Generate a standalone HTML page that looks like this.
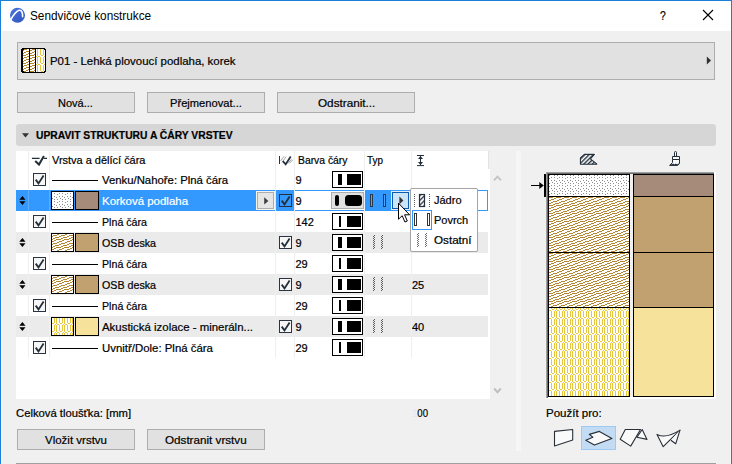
<!DOCTYPE html>
<html><head><meta charset="utf-8"><title>Sendvičové konstrukce</title>
<style>
html,body{margin:0;padding:0;}
body{width:732px;height:464px;overflow:hidden;background:#f0f0f0;position:relative;font-family:"Liberation Sans",sans-serif;font-size:11px;color:#000;}
.a{position:absolute;}
.t{position:absolute;white-space:nowrap;line-height:14px;height:14px;transform-origin:0 50%;-webkit-text-stroke:0.2px currentColor;}
.btn{position:absolute;box-sizing:border-box;background:#e1e1e1;border:1px solid #adadad;}
.row{position:absolute;left:16px;width:472px;height:21px;}
.g{background:#f0f0f0;}
.w{background:#fff;}
.cb{position:absolute;width:13px;height:13px;box-sizing:border-box;border:1px solid #2a3440;background:#f6f6f6;}
.ln{position:absolute;left:52px;width:46px;height:1px;background:#000;}
.sw{position:absolute;box-sizing:border-box;border:1px solid #000;width:24px;height:19px;}
.pen{position:absolute;left:332px;width:31px;height:17px;box-sizing:border-box;border:1px solid #000;background:#fff;}
.pen i{position:absolute;top:2px;height:11px;background:#000;}
.sep{width:1px;background:#efefef;}
</style></head><body>
<svg width="0" height="0" style="position:absolute">
<defs>
<pattern id="p_dots" width="8" height="8" patternUnits="userSpaceOnUse" x="2" y="5">
<g fill="#8e8e8e" shape-rendering="crispEdges"><rect x="3" y="0" width="1" height="1"/><rect x="6" y="0" width="1" height="1"/><rect x="1" y="1" width="1" height="1"/><rect x="3" y="3" width="1" height="1"/><rect x="6" y="3" width="1" height="1"/><rect x="0" y="4" width="1" height="1"/><rect x="4" y="5" width="1" height="1"/><rect x="1" y="6" width="1" height="1"/><rect x="6" y="6" width="1" height="1"/></g>
</pattern>
<pattern id="p_osb" width="8" height="8" patternUnits="userSpaceOnUse" x="2" y="1">
<g fill="#b5852d" shape-rendering="crispEdges"><rect x="0" y="0" width="5" height="1"/><rect x="6" y="1" width="2" height="1"/><rect x="3" y="2" width="3" height="1"/><rect x="1" y="3" width="2" height="1"/><rect x="0" y="4" width="1" height="1"/><rect x="5" y="4" width="3" height="1"/><rect x="3" y="5" width="2" height="1"/><rect x="0" y="6" width="3" height="1"/><rect x="7" y="6" width="1" height="1"/><rect x="5" y="7" width="2" height="1"/></g>
</pattern>
<pattern id="p_insL" width="8" height="8" patternUnits="userSpaceOnUse" x="5" y="2">
<g fill="#e8c63c"><rect x="0" y="1" width="1" height="6"/><rect x="3" y="1" width="1" height="6"/><rect x="5" y="1" width="1" height="7"/><rect x="1" y="7" width="2" height="1"/><rect x="4" y="0" width="1" height="1"/><rect x="6" y="0" width="2" height="1"/></g>
</pattern>
<pattern id="p_ins" href="#p_insL" x="7" y="6"/>
<pattern id="p_dotsS" href="#p_dots" x="4" y="1"/>
<pattern id="p_osbS2" href="#p_osb" x="4" y="5"/>
</defs></svg>

<!-- window frame -->
<div class="a" style="left:0;top:0;width:732px;height:31px;background:#fff;"></div>
<div class="a" style="left:0;top:0;width:732px;height:1px;background:#1a7fd6;"></div>
<div class="a" style="left:0;top:0;width:1px;height:464px;background:#1a7fd6;"></div>
<div class="a" style="left:731px;top:0;width:1px;height:464px;background:#1a7fd6;"></div>
<div class="a" style="left:1px;top:31px;width:1px;height:433px;background:#fafafa;"></div>
<div class="a" style="left:730px;top:31px;width:1px;height:433px;background:#f8f4f2;"></div>
<div class="t" style="left:30px;top:8px;font-size:12px;line-height:16px;height:16px;transform:scaleX(0.982);-webkit-text-stroke:0;">Sendvičové konstrukce</div>

<!-- combo -->
<div class="btn" style="left:17px;top:42px;width:698px;height:38px;"></div>
<div class="t" style="left:50px;top:54px;font-size:11.5px;transform:scaleX(0.994);">P01 - Lehká plovoucí podlaha, korek</div>


<!-- title icon -->
<svg class="a" style="left:9px;top:7px;" width="17" height="17" viewBox="0 0 17 17">
<defs><linearGradient id="ig" x1="0" y1="0" x2="1" y2="1"><stop offset="0" stop-color="#4a74dc"/><stop offset="1" stop-color="#2f55bd"/></linearGradient></defs>
<circle cx="8.5" cy="8.2" r="7.5" fill="url(#ig)"/>
<path d="M1.4 13.3 C3.5 9.5 7 4.2 10.2 3.3 C12.6 2.7 13.8 6 13.6 9.8" fill="none" stroke="#fff" stroke-width="1.6" stroke-linecap="round"/>
</svg>
<div class="t" style="left:660px;top:8px;font-size:13px;line-height:16px;height:16px;transform:scaleX(0.8);">?</div>
<svg class="a" style="left:702px;top:9px;" width="12" height="12" viewBox="0 0 12 12"><path d="M1 1 L11 11 M11 1 L1 11" stroke="#000" stroke-width="1.1" fill="none"/></svg>
<!-- combo icon -->
<svg class="a" style="left:21px;top:48px;" width="25" height="25" viewBox="0 0 25 25" shape-rendering="crispEdges">
<defs><pattern id="p_insI" href="#p_insL" x="3" y="0"/><pattern id="p_osbI" href="#p_osb" x="0" y="7"/></defs>
<rect x="1" y="1" width="23" height="23" fill="#fff"/>
<rect x="2" y="1" width="6" height="23" fill="url(#p_osbI)"/>
<rect x="9" y="1" width="5" height="23" fill="url(#p_osbI)"/>
<rect x="15" y="1" width="9" height="23" fill="url(#p_insI)"/>
<g fill="#000"><rect x="1" y="0" width="23" height="1"/><rect x="1" y="24" width="23" height="1"/><rect x="0" y="1" width="2" height="23"/><rect x="24" y="1" width="1" height="23"/><rect x="8" y="1" width="1" height="23"/><rect x="14" y="1" width="1" height="23"/>
<rect x="2" y="1" width="1" height="1"/><rect x="2" y="23" width="1" height="1"/><rect x="23" y="1" width="1" height="1"/><rect x="23" y="23" width="1" height="1"/></g>
</svg>
<svg class="a" style="left:706px;top:56px;" width="6" height="9" viewBox="0 0 6 9"><path d="M0.8 0.5 L5 4.5 L0.8 8.5 Z" fill="#303030"/></svg>

<!-- buttons -->
<div class="btn" style="left:17px;top:92px;width:118px;height:21px;"></div>
<div class="btn" style="left:147px;top:92px;width:118px;height:21px;"></div>
<div class="btn" style="left:277px;top:92px;width:138px;height:21px;"></div>


<div class="t" style="left:58px;top:96px;width:36px;">Nová...</div>
<div class="t" style="left:170px;top:96px;transform:scaleX(1.013);">Přejmenovat...</div>
<div class="t" style="left:317.8px;top:96px;transform:scaleX(1.065);">Odstranit...</div>

<!-- section header -->
<div class="a" style="left:16px;top:124px;width:700px;height:22px;background:#d6d6d6;border-radius:3px;"></div>


<svg class="a" style="left:22px;top:132.5px;" width="7" height="5" viewBox="0 0 7 5"><path d="M0 0.3 H7 L3.5 4.4 Z" fill="#333"/></svg>
<div class="t" style="left:36px;top:128px;font-weight:bold;font-size:11px;transform:scaleX(0.937);">UPRAVIT STRUKTURU A ČÁRY VRSTEV</div>

<!-- list -->
<div class="a w" style="left:16px;top:169px;width:474px;height:230px;"></div>
<div class="a w" style="left:16px;top:151px;width:472px;height:18px;"></div>
<!--LISTSTART-->
<div class="a" style="left:488px;top:151px;width:1px;height:18px;background:#e3e3e3;"></div>
<!-- row 1 -->
<div class="cb" style="left:33px;top:173px;"><svg class="a" style="left:0;top:0;" width="11" height="11" viewBox="0 0 11 11"><path d="M1.7 5.6 L4.5 9.4 L9.6 1.6" stroke="#222e3a" stroke-width="1.8" fill="none"/></svg></div>
<div class="ln" style="top:180px;"></div>
<div class="t" style="left:102px;top:173px;color:#000;transform:scaleX(1.031);">Venku/Nahoře: Plná čára</div>
<div class="pen" style="top:171px;"><i style="left:5px;width:4px;"></i><i style="left:14px;width:13.5px;"></i></div>
<div class="t" style="left:295.5px;top:173px;">9</div>
<!-- row 2 -->
<div class="row" style="top:190px;background:#3399ff;"></div>
<svg class="a" style="left:19px;top:196px;" width="7" height="9" viewBox="0 0 7 9"><path d="M3.4 0 L6.5 3.8 H0.3 Z M3.4 9 L6.5 5.2 H0.3 Z" fill="#000"/></svg>
<div class="sw" style="left:51px;width:23px;top:191px;background:#fff;"><svg class="a" style="left:0;top:0" width="21" height="17"><rect width="21" height="17" fill="url(#p_dotsS)"/></svg></div>
<div class="sw" style="left:75px;top:191px;background:#a68b7b;"></div>
<div class="t" style="left:102px;top:194px;color:#fff;transform:scaleX(1.042);">Korková podlaha</div>
<div class="a" style="left:256px;top:191px;width:19px;height:19px;background:#f6f3ee;"></div>
<div class="btn" style="left:257px;top:192px;width:17px;height:17px;background:#e5e5e5;"><svg class="a" style="left:6px;top:4px;" width="5" height="8" viewBox="0 0 5 8"><path d="M0.2 0.2 L4.4 3.9 L0.2 7.6 Z" fill="#404040"/></svg></div>
<div class="a" style="left:295px;top:190px;width:70px;height:21px;box-sizing:border-box;border-top:1px solid #3399ff;border-bottom:1px solid #3399ff;background:#fff;"></div>
<div class="cb" style="left:279px;top:194px;background:#3399ff;border-color:#26303c;"><svg class="a" style="left:0;top:0;" width="11" height="11" viewBox="0 0 11 11"><path d="M1.7 5.6 L4.5 9.4 L9.6 1.6" stroke="#222e3a" stroke-width="1.8" fill="none"/></svg></div>
<div class="a" style="left:331px;top:192px;width:33px;height:17px;background:#e1e1e1;box-sizing:border-box;border:1px solid #adadad;"><i class="a" style="left:3px;top:2px;width:4px;height:11px;background:#000;border-radius:2px;"></i><i class="a" style="left:13px;top:2px;width:17px;height:11px;background:#000;border-radius:3.5px;"></i></div>
<div class="t" style="left:295.5px;top:194px;">9</div>
<!-- row 3 -->
<div class="cb" style="left:33px;top:215px;"><svg class="a" style="left:0;top:0;" width="11" height="11" viewBox="0 0 11 11"><path d="M1.7 5.6 L4.5 9.4 L9.6 1.6" stroke="#222e3a" stroke-width="1.8" fill="none"/></svg></div>
<div class="ln" style="top:222px;"></div>
<div class="t" style="left:102px;top:215px;color:#000;transform:scaleX(0.968);">Plná čára</div>
<div class="pen" style="top:213px;"><i style="left:6px;width:2px;"></i><i style="left:14px;width:13.5px;"></i></div>
<div class="t" style="left:295.5px;top:215px;">142</div>
<!-- row 4 -->
<div class="row" style="top:232px;background:#ebebeb;"></div>
<svg class="a" style="left:19px;top:238px;" width="7" height="9" viewBox="0 0 7 9"><path d="M3.4 0 L6.5 3.8 H0.3 Z M3.4 9 L6.5 5.2 H0.3 Z" fill="#000"/></svg>
<div class="sw" style="left:51px;width:23px;top:233px;background:#fff;"><svg class="a" style="left:0;top:0" width="21" height="17"><rect width="21" height="17" fill="url(#p_osbS2)"/></svg></div>
<div class="sw" style="left:75px;top:233px;background:#c2a171;"></div>
<div class="t" style="left:102px;top:236px;color:#000;transform:scaleX(0.971);">OSB deska</div>
<div class="cb" style="left:279px;top:236px;"><svg class="a" style="left:0;top:0;" width="11" height="11" viewBox="0 0 11 11"><path d="M1.7 5.6 L4.5 9.4 L9.6 1.6" stroke="#222e3a" stroke-width="1.8" fill="none"/></svg></div>
<div class="pen" style="top:234px;"><i style="left:5px;width:4px;"></i><i style="left:14px;width:13.5px;"></i></div>
<div class="t" style="left:295.5px;top:236px;">9</div>
<svg class="a" style="left:373px;top:235px;" width="10" height="14" viewBox="0 0 10 14" shape-rendering="crispEdges"><g fill="#5a5a5a"><rect x="1" y="0" width="1" height="1"/><rect x="9" y="0" width="1" height="1"/><rect x="0" y="1" width="1" height="1"/><rect x="8" y="1" width="1" height="1"/><rect x="1" y="2" width="1" height="1"/><rect x="9" y="2" width="1" height="1"/><rect x="0" y="3" width="1" height="1"/><rect x="8" y="3" width="1" height="1"/><rect x="1" y="4" width="1" height="1"/><rect x="9" y="4" width="1" height="1"/><rect x="0" y="5" width="1" height="1"/><rect x="8" y="5" width="1" height="1"/><rect x="1" y="6" width="1" height="1"/><rect x="9" y="6" width="1" height="1"/><rect x="0" y="7" width="1" height="1"/><rect x="8" y="7" width="1" height="1"/><rect x="1" y="8" width="1" height="1"/><rect x="9" y="8" width="1" height="1"/><rect x="0" y="9" width="1" height="1"/><rect x="8" y="9" width="1" height="1"/><rect x="1" y="10" width="1" height="1"/><rect x="9" y="10" width="1" height="1"/><rect x="0" y="11" width="1" height="1"/><rect x="8" y="11" width="1" height="1"/><rect x="1" y="12" width="1" height="1"/><rect x="9" y="12" width="1" height="1"/><rect x="0" y="13" width="1" height="1"/><rect x="8" y="13" width="1" height="1"/></g></svg>
<!-- row 5 -->
<div class="cb" style="left:33px;top:257px;"><svg class="a" style="left:0;top:0;" width="11" height="11" viewBox="0 0 11 11"><path d="M1.7 5.6 L4.5 9.4 L9.6 1.6" stroke="#222e3a" stroke-width="1.8" fill="none"/></svg></div>
<div class="ln" style="top:264px;"></div>
<div class="t" style="left:102px;top:257px;color:#000;transform:scaleX(0.968);">Plná čára</div>
<div class="pen" style="top:255px;"><i style="left:6px;width:2px;"></i><i style="left:14px;width:13.5px;"></i></div>
<div class="t" style="left:295.5px;top:257px;">29</div>
<!-- row 6 -->
<div class="row" style="top:274px;background:#ebebeb;"></div>
<svg class="a" style="left:19px;top:280px;" width="7" height="9" viewBox="0 0 7 9"><path d="M3.4 0 L6.5 3.8 H0.3 Z M3.4 9 L6.5 5.2 H0.3 Z" fill="#000"/></svg>
<div class="sw" style="left:51px;width:23px;top:275px;background:#fff;"><svg class="a" style="left:0;top:0" width="21" height="17"><rect width="21" height="17" fill="url(#p_osbS2)"/></svg></div>
<div class="sw" style="left:75px;top:275px;background:#c2a171;"></div>
<div class="t" style="left:102px;top:278px;color:#000;transform:scaleX(0.971);">OSB deska</div>
<div class="cb" style="left:279px;top:278px;"><svg class="a" style="left:0;top:0;" width="11" height="11" viewBox="0 0 11 11"><path d="M1.7 5.6 L4.5 9.4 L9.6 1.6" stroke="#222e3a" stroke-width="1.8" fill="none"/></svg></div>
<div class="pen" style="top:276px;"><i style="left:5px;width:4px;"></i><i style="left:14px;width:13.5px;"></i></div>
<div class="t" style="left:295.5px;top:278px;">9</div>
<svg class="a" style="left:373px;top:277px;" width="10" height="14" viewBox="0 0 10 14" shape-rendering="crispEdges"><g fill="#5a5a5a"><rect x="1" y="0" width="1" height="1"/><rect x="9" y="0" width="1" height="1"/><rect x="0" y="1" width="1" height="1"/><rect x="8" y="1" width="1" height="1"/><rect x="1" y="2" width="1" height="1"/><rect x="9" y="2" width="1" height="1"/><rect x="0" y="3" width="1" height="1"/><rect x="8" y="3" width="1" height="1"/><rect x="1" y="4" width="1" height="1"/><rect x="9" y="4" width="1" height="1"/><rect x="0" y="5" width="1" height="1"/><rect x="8" y="5" width="1" height="1"/><rect x="1" y="6" width="1" height="1"/><rect x="9" y="6" width="1" height="1"/><rect x="0" y="7" width="1" height="1"/><rect x="8" y="7" width="1" height="1"/><rect x="1" y="8" width="1" height="1"/><rect x="9" y="8" width="1" height="1"/><rect x="0" y="9" width="1" height="1"/><rect x="8" y="9" width="1" height="1"/><rect x="1" y="10" width="1" height="1"/><rect x="9" y="10" width="1" height="1"/><rect x="0" y="11" width="1" height="1"/><rect x="8" y="11" width="1" height="1"/><rect x="1" y="12" width="1" height="1"/><rect x="9" y="12" width="1" height="1"/><rect x="0" y="13" width="1" height="1"/><rect x="8" y="13" width="1" height="1"/></g></svg>
<div class="t" style="left:412px;top:278px;">25</div>
<!-- row 7 -->
<div class="cb" style="left:33px;top:299px;"><svg class="a" style="left:0;top:0;" width="11" height="11" viewBox="0 0 11 11"><path d="M1.7 5.6 L4.5 9.4 L9.6 1.6" stroke="#222e3a" stroke-width="1.8" fill="none"/></svg></div>
<div class="ln" style="top:306px;"></div>
<div class="t" style="left:102px;top:299px;color:#000;transform:scaleX(0.968);">Plná čára</div>
<div class="pen" style="top:297px;"><i style="left:6px;width:2px;"></i><i style="left:14px;width:13.5px;"></i></div>
<div class="t" style="left:295.5px;top:299px;">29</div>
<!-- row 8 -->
<div class="row" style="top:316px;background:#ebebeb;"></div>
<svg class="a" style="left:19px;top:322px;" width="7" height="9" viewBox="0 0 7 9"><path d="M3.4 0 L6.5 3.8 H0.3 Z M3.4 9 L6.5 5.2 H0.3 Z" fill="#000"/></svg>
<div class="sw" style="left:51px;width:23px;top:317px;background:#fff;"><svg class="a" style="left:0;top:0" width="21" height="17"><rect width="21" height="17" fill="url(#p_ins)"/></svg></div>
<div class="sw" style="left:75px;top:317px;background:#f6e29b;"></div>
<div class="t" style="left:102px;top:320px;color:#000;transform:scaleX(1.038);">Akustická izolace - mineráln...</div>
<div class="cb" style="left:279px;top:320px;"><svg class="a" style="left:0;top:0;" width="11" height="11" viewBox="0 0 11 11"><path d="M1.7 5.6 L4.5 9.4 L9.6 1.6" stroke="#222e3a" stroke-width="1.8" fill="none"/></svg></div>
<div class="pen" style="top:318px;"><i style="left:5px;width:4px;"></i><i style="left:14px;width:13.5px;"></i></div>
<div class="t" style="left:295.5px;top:320px;">9</div>
<svg class="a" style="left:373px;top:319px;" width="10" height="14" viewBox="0 0 10 14" shape-rendering="crispEdges"><g fill="#5a5a5a"><rect x="1" y="0" width="1" height="1"/><rect x="9" y="0" width="1" height="1"/><rect x="0" y="1" width="1" height="1"/><rect x="8" y="1" width="1" height="1"/><rect x="1" y="2" width="1" height="1"/><rect x="9" y="2" width="1" height="1"/><rect x="0" y="3" width="1" height="1"/><rect x="8" y="3" width="1" height="1"/><rect x="1" y="4" width="1" height="1"/><rect x="9" y="4" width="1" height="1"/><rect x="0" y="5" width="1" height="1"/><rect x="8" y="5" width="1" height="1"/><rect x="1" y="6" width="1" height="1"/><rect x="9" y="6" width="1" height="1"/><rect x="0" y="7" width="1" height="1"/><rect x="8" y="7" width="1" height="1"/><rect x="1" y="8" width="1" height="1"/><rect x="9" y="8" width="1" height="1"/><rect x="0" y="9" width="1" height="1"/><rect x="8" y="9" width="1" height="1"/><rect x="1" y="10" width="1" height="1"/><rect x="9" y="10" width="1" height="1"/><rect x="0" y="11" width="1" height="1"/><rect x="8" y="11" width="1" height="1"/><rect x="1" y="12" width="1" height="1"/><rect x="9" y="12" width="1" height="1"/><rect x="0" y="13" width="1" height="1"/><rect x="8" y="13" width="1" height="1"/></g></svg>
<div class="t" style="left:412px;top:320px;">40</div>
<!-- row 9 -->
<div class="cb" style="left:33px;top:341px;"><svg class="a" style="left:0;top:0;" width="11" height="11" viewBox="0 0 11 11"><path d="M1.7 5.6 L4.5 9.4 L9.6 1.6" stroke="#222e3a" stroke-width="1.8" fill="none"/></svg></div>
<div class="ln" style="top:348px;"></div>
<div class="t" style="left:102px;top:341px;color:#000;transform:scaleX(1.037);">Uvnitř/Dole: Plná čára</div>
<div class="pen" style="top:339px;"><i style="left:6px;width:2px;"></i><i style="left:14px;width:13.5px;"></i></div>
<div class="t" style="left:295.5px;top:341px;">29</div>
<div class="a sep" style="left:28px;top:151px;height:207px;"></div>
<div class="a sep" style="left:49px;top:151px;height:207px;"></div>
<div class="a sep" style="left:275px;top:151px;height:207px;"></div>
<div class="a sep" style="left:294px;top:151px;height:207px;"></div>
<div class="a sep" style="left:364px;top:151px;height:207px;"></div>
<div class="a sep" style="left:411px;top:151px;height:207px;"></div>
<svg class="a" style="left:31px;top:154px;" width="17" height="12" viewBox="0 0 17 12"><path d="M0.9 4.4 H8.6 M12.6 4.4 H16" stroke="#222e3a" stroke-width="1.1" fill="none"/><path d="M4.2 7 L8 10.6 L12.9 2" stroke="#222e3a" stroke-width="2" fill="none"/></svg>
<div class="t" style="left:52px;top:153px;transform:scaleX(0.997);">Vrstva a dělící čára</div>
<svg class="a" style="left:278px;top:154px;" width="17" height="12" viewBox="0 0 17 12"><path d="M1.5 2 V10" stroke="#2a3440" stroke-width="1"/><path d="M2.5 7 L6 2.3 M4 8.3 L8.2 2.6 M11.5 9.3 L14.8 5.8 M10 9.3 L13.6 5.2" stroke="#8a929a" stroke-width="0.8"/><path d="M4.8 7.1 L7.7 10.3 L12.7 2.5" stroke="#222e3a" stroke-width="1.7" fill="none"/></svg>
<div class="t" style="left:298px;top:153px;transform:scaleX(0.94);">Barva čáry</div>
<div class="t" style="left:367px;top:153px;transform:scaleX(0.9);">Typ</div>
<svg class="a" style="left:416px;top:154px;" width="10" height="13" viewBox="0 0 10 13"><path d="M1 1.5 H8 M1 11.6 H8 M4.5 2 V11" stroke="#222e3a" stroke-width="1" fill="none"/><path d="M4.5 2 L7 5 H2 Z M4.5 11 L7 8 H2 Z" fill="#222e3a"/></svg>

<!--LISTEND-->

<!-- scrollbar arrows -->
<svg class="a" style="left:493px;top:174px;" width="9" height="8" viewBox="0 0 9 8"><path d="M1 6.3 L4.5 2.6 L8 6.3" stroke="#c3c3c3" stroke-width="1.8" fill="none"/></svg>
<svg class="a" style="left:493px;top:387px;" width="9" height="8" viewBox="0 0 9 8"><path d="M1.2 1.5 L4.5 5.2 L7.8 1.5" stroke="#bfbfbf" stroke-width="2" fill="none"/></svg>
<!-- splitter -->
<div class="a" style="left:516px;top:151px;width:5px;height:300px;background:#f6f6f6;"></div>
<!-- preview header icons -->
<svg class="a" style="left:578px;top:152px;" width="22" height="15" viewBox="0 0 22 15">
<defs><pattern id="hx" width="3" height="3" patternUnits="userSpaceOnUse" patternTransform="rotate(-45)"><rect width="3" height="1.4" fill="#222e3a"/></pattern></defs>
<path d="M2.4 6 L6.3 2.4 H16.4 L12.4 6.9 L18.8 11.9 L18.8 12.2 H2.4 Z" fill="#fff" stroke="#fff" stroke-width="2.2"/>
<path d="M2.4 6 L6.3 2.4 H16.4 L12.4 6.9 L18.8 11.9 L18.8 12.2 H2.4 Z" fill="url(#hx)" stroke="#222e3a" stroke-width="1.1" stroke-linejoin="round"/>
</svg>
<svg class="a" style="left:667px;top:149px;" width="16" height="19" viewBox="0 0 16 19">
<path d="M7.5 7.5 V3.6 a1 1.1 0 0 1 2 0 V7.5 M5.5 7.5 H12.5 V10.5 H5.5 Z M5.5 10.5 V13.6 L2.6 16.4 H10.6 L12.5 14.6 V10.5" fill="#fafafa" stroke="#222e3a" stroke-width="1" stroke-linejoin="round"/>
<path d="M2.6 16.4 H10.6 L12.3 14.8 L11.2 14.6 L10.2 15.6 L8.8 14.6 L7.6 15.6 L6.2 14.6 L4.8 15.6 L4.2 15 Z" fill="#222e3a"/>
</svg>
<!-- indicator arrow -->
<div class="a" style="left:531px;top:185px;width:10px;height:1px;background:#000;"></div>
<svg class="a" style="left:539px;top:181px;" width="5" height="9" viewBox="0 0 5 9"><path d="M0.3 1 L4.8 4.5 L0.3 8 Z" fill="#000"/></svg>
<div class="a" style="left:544px;top:174px;width:2px;height:23px;background:#000;"></div>
<!-- preview -->
<svg class="a" style="left:546px;top:172px;" width="170" height="227" viewBox="0 0 170 227" shape-rendering="crispEdges">
<defs>

</defs>
<rect x="0" y="0" width="170" height="227" fill="#fff"/>
<rect x="0" y="0" width="168" height="1" fill="#a0a0a0"/><rect x="0" y="0" width="1" height="226" fill="#a0a0a0"/>
<rect x="1" y="1" width="167" height="1" fill="#696969"/><rect x="1" y="1" width="1" height="225" fill="#696969"/>
<rect x="84" y="2" width="3" height="223" fill="#f0f0f0"/>
<!-- left column: x 2..83 (548..629), y 2..224 (174..396) -->
<rect x="3" y="3" width="80" height="21" fill="url(#p_dots)"/>
<rect x="3" y="25" width="80" height="55" fill="url(#p_osb)"/>
<rect x="3" y="81" width="80" height="54" fill="url(#p_osb)"/>
<rect x="3" y="136" width="80" height="88" fill="url(#p_insL)"/>
<g fill="#000">
<rect x="2" y="2" width="82" height="1"/><rect x="2" y="224" width="82" height="1"/><rect x="2" y="2" width="1" height="223"/><rect x="83" y="2" width="1" height="223"/>
<rect x="2" y="24" width="82" height="1"/><rect x="2" y="80" width="82" height="1"/><rect x="2" y="135" width="82" height="1"/>
</g>
<!-- right column: x 87..167 (633..713) -->
<rect x="88" y="3" width="79" height="21" fill="#a68b7b"/>
<rect x="88" y="25" width="79" height="55" fill="#c2a171"/>
<rect x="88" y="81" width="79" height="54" fill="#c2a171"/>
<rect x="88" y="136" width="79" height="88" fill="#f6e29b"/>
<g fill="#000">
<rect x="87" y="2" width="81" height="1"/><rect x="87" y="224" width="81" height="1"/><rect x="87" y="2" width="1" height="223"/><rect x="167" y="2" width="1" height="223"/>
<rect x="87" y="24" width="81" height="1"/><rect x="87" y="80" width="81" height="1"/><rect x="87" y="135" width="81" height="1"/>
</g>
</svg>
<!-- use for -->
<div class="t" style="left:546.2px;top:406px;transform:scaleX(1.047);">Použít pro:</div>
<div class="a" style="left:581px;top:426px;width:35px;height:24px;box-sizing:border-box;background:#c4dcf3;border:1px solid #9ccaf2;"></div>
<svg class="a" style="left:548px;top:422px;" width="140" height="32" viewBox="0 0 140 32">
<g fill="#fafafa" stroke="#2a3038" stroke-width="1.1" stroke-linejoin="round">
<path d="M6.5 9.4 L24.7 7.5 V18 L6.5 23.9 Z"/>
<path d="M37.8 18.2 L44.9 15.3 L41.3 12.4 L51.4 9.4 L63.9 16.4 L46.4 23.1 Z"/>
<path d="M94.2 7.5 L99 17.4 L89 15.3 Z"/>
<path d="M72.2 17.2 L77.3 7.5 H92.5 L82.7 24.1 Z"/>
<path d="M109 12.4 Q118 17 132 8.1 L115.2 24.7 Z"/>
<path d="M132 8.1 L127.7 21.8 L122.9 18.2"/>
</g>
</svg>


<!-- selected row: type cell + edit field -->
<div class="a" style="left:28px;top:190px;width:1px;height:21px;background:#5cadff;"></div><div class="a" style="left:49px;top:190px;width:1px;height:21px;background:#5cadff;"></div><div class="a" style="left:275px;top:190px;width:1px;height:21px;background:#dbe9f7;"></div><div class="a" style="left:364px;top:190px;width:1px;height:21px;background:#eaf2fb;"></div>
<div class="a" style="left:370px;top:194px;width:3px;height:13px;box-sizing:border-box;border:1px solid #2b3a4a;background:#4fa5fb;"></div>
<div class="a" style="left:383px;top:194px;width:3px;height:13px;box-sizing:border-box;border:1px solid #2b3a4a;background:#4fa5fb;"></div>
<div class="a" style="left:391px;top:191px;width:19px;height:19px;box-sizing:border-box;border:1px solid #e3f0fb;background:#0b5cad;"><div class="a" style="left:1px;top:1px;width:15px;height:15px;background:#cce4f7;"></div></div>
<svg class="a" style="left:399px;top:196px;" width="5" height="9" viewBox="0 0 5 9"><path d="M0.4 0.6 L4.4 4.4 L0.4 8.2 Z" fill="#333"/></svg>
<div class="a" style="left:412px;top:190px;width:76px;height:21px;box-sizing:border-box;border:1px solid #3399ff;background:#fff;"></div>
<!-- popup -->
<div class="a" style="left:410px;top:188px;width:68px;height:64px;box-sizing:border-box;border:1px solid #a6a6a6;background:#fff;border-radius:2px;box-shadow:0 0 1px rgba(0,0,0,0.12);"></div>
<svg class="a" style="left:411px;top:189px;" width="24" height="62" viewBox="0 0 24 62">
<defs><pattern id="hx2" width="3.4" height="3.4" patternUnits="userSpaceOnUse" patternTransform="rotate(-45)"><rect width="3.4" height="1.3" fill="#2a3440"/></pattern></defs>
<path d="M3.5 5 V18 M18.5 5 V18" stroke="#5a5a5a" stroke-width="1" stroke-dasharray="1 1" fill="none"/>
<rect x="8.5" y="5.5" width="5" height="12" fill="#fff"/><rect x="8.5" y="5.5" width="5" height="12" fill="url(#hx2)" stroke="#26303c" stroke-width="1.2"/>
<rect x="1.5" y="21.5" width="19" height="19" fill="#fff" stroke="#3399ff" stroke-width="1"/>
<rect x="3.5" y="24.5" width="2" height="12" fill="#fff" stroke="#333" stroke-width="1"/>
<rect x="16.5" y="24.5" width="2" height="12" fill="#fff" stroke="#333" stroke-width="1"/>
</svg>
<svg class="a" style="left:417px;top:233px;" width="10" height="14" viewBox="0 0 10 14" shape-rendering="crispEdges"><g fill="#6a6a6a"><rect x="1" y="0" width="1" height="1"/><rect x="9" y="0" width="1" height="1"/><rect x="0" y="1" width="1" height="1"/><rect x="8" y="1" width="1" height="1"/><rect x="1" y="2" width="1" height="1"/><rect x="9" y="2" width="1" height="1"/><rect x="0" y="3" width="1" height="1"/><rect x="8" y="3" width="1" height="1"/><rect x="1" y="4" width="1" height="1"/><rect x="9" y="4" width="1" height="1"/><rect x="0" y="5" width="1" height="1"/><rect x="8" y="5" width="1" height="1"/><rect x="1" y="6" width="1" height="1"/><rect x="9" y="6" width="1" height="1"/><rect x="0" y="7" width="1" height="1"/><rect x="8" y="7" width="1" height="1"/><rect x="1" y="8" width="1" height="1"/><rect x="9" y="8" width="1" height="1"/><rect x="0" y="9" width="1" height="1"/><rect x="8" y="9" width="1" height="1"/><rect x="1" y="10" width="1" height="1"/><rect x="9" y="10" width="1" height="1"/><rect x="0" y="11" width="1" height="1"/><rect x="8" y="11" width="1" height="1"/><rect x="1" y="12" width="1" height="1"/><rect x="9" y="12" width="1" height="1"/><rect x="0" y="13" width="1" height="1"/><rect x="8" y="13" width="1" height="1"/></g></svg>
<div class="t" style="left:434px;top:193px;transform:scaleX(1.0);">Jádro</div>
<div class="t" style="left:434px;top:213px;transform:scaleX(1.0);">Povrch</div>
<div class="t" style="left:434px;top:233px;transform:scaleX(1.06);">Ostatní</div>
<!-- cursor -->
<svg class="a" style="left:397px;top:202px;" width="14" height="22" viewBox="0 0 14 22">
<path d="M1.5 1.2 V17.2 L5.2 13.7 L7.9 20 L10.3 19 L7.6 12.8 H12.6 Z" fill="#fff" stroke="#000" stroke-width="1" stroke-linejoin="miter"/>
</svg>

<!-- bottom -->
<div class="t" style="left:16.4px;top:406px;transform:scaleX(1.024);">Celková tloušťka: [mm]</div>
<div class="t" style="left:412px;top:406px;transform:scaleX(0.87);"><span style="color:#dfe8f0;-webkit-text-stroke:0;">1</span>00</div>
<div class="btn" style="left:17px;top:429px;width:118px;height:21px;"></div>
<div class="btn" style="left:147px;top:429px;width:118px;height:21px;"></div>
<div class="t" style="left:45px;top:433px;transform:scaleX(1.045);">Vložit vrstvu</div>
<div class="t" style="left:165px;top:433px;transform:scaleX(1.06);">Odstranit vrstvu</div>


<div class="a" style="left:16px;top:463px;width:700px;height:1px;background:#a0a0a0;"></div>
</body></html>
